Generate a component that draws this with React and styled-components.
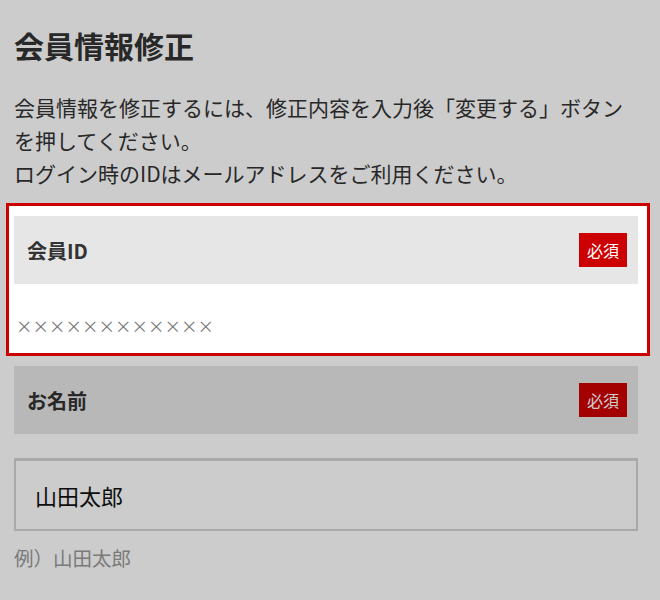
import React from "react";
import styled, { createGlobalStyle } from "styled-components";

const GlobalStyle = createGlobalStyle`
    html, body {
        margin: 0;
        padding: 0;
        background: #ffffff;
        overflow: hidden;
    }
    body {
        font-family: "Noto Sans CJK JP", "Noto Sans", sans-serif;
        color: #333333;
    }
`;

export default function App() {
    return (
        <Page>
            <GlobalStyle />
            <Title>会員情報修正</Title>
            <Lead>
                会員情報を修正するには、修正内容を入力後「変更する」ボタンを押してください。
                <br />
                ログイン時のIDはメールアドレスをご利用ください。
            </Lead>

            <Spotlight>
                <FieldHead>
                    <Label>会員ID</Label>
                    <Required>必須</Required>
                </FieldHead>
                <Value>××××××××××××</Value>
            </Spotlight>

            <Field>
                <FieldHead>
                    <Label>お名前</Label>
                    <Required>必須</Required>
                </FieldHead>
                <Input defaultValue="山田太郎" />
                <Hint>例）山田太郎</Hint>
            </Field>
        </Page>
    );
}

const Page = styled.div`
    width: 624px;
    margin-left: 14px;
    padding-top: 23px;
    height: 600px;
    box-sizing: border-box;
`;

const Title = styled.h1`
    margin: 0;
    font-size: 30px;
    line-height: 44px;
    font-weight: 700;
    color: #333333;
`;

const Lead = styled.p`
    margin: 24px 0 0;
    font-size: 21px;
    line-height: 33px;
    color: #333333;
`;

const Spotlight = styled.section`
    position: relative;
    z-index: 1;
    margin: 13px -12px 0 -8px;
    padding: 10px 9px 0 5px;
    border: 3px solid #cc0000;
    background: #ffffff;
    box-shadow: 0 0 0 2000px rgba(0, 0, 0, 0.2);
`;

const Field = styled.section`
    margin-top: 10px;
`;

const FieldHead = styled.div`
    display: flex;
    align-items: center;
    justify-content: space-between;
    height: 68px;
    padding: 0 11px 0 13px;
    background: #e6e6e6;
`;

const Label = styled.span`
    font-size: 20px;
    font-weight: 700;
    color: #333333;
`;

const Required = styled.span`
    display: flex;
    align-items: center;
    justify-content: center;
    width: 48px;
    height: 34px;
    background: #cc0000;
    color: #ffffff;
    font-size: 16px;
`;

const Value = styled.div`
    padding: 29px 0 14px 2px;
    font-size: 16.5px;
    line-height: 26px;
    color: #777777;
`;

const Input = styled.input`
    display: block;
    box-sizing: border-box;
    width: 100%;
    height: 73px;
    margin-top: 24px;
    padding: 0 19px;
    border: 2px solid #d4d4d4;
    border-top-width: 3px;
    background: #ffffff;
    font-family: "Noto Sans CJK JP", "Noto Sans", sans-serif;
    font-size: 22px;
    color: #111111;
    outline: none;
`;

const Hint = styled.p`
    margin: 12px 0 0;
    font-size: 19.5px;
    line-height: 30px;
    color: #999999;
`;
